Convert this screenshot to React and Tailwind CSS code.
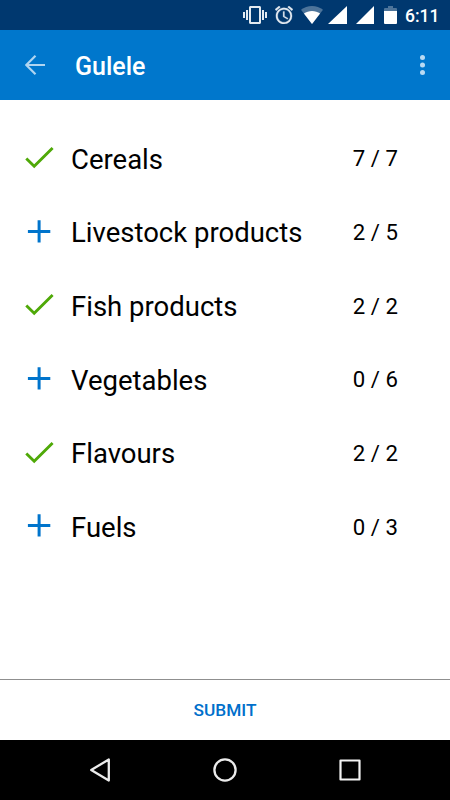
import React from 'react'

const ITEMS = [
  { name: 'Cereals', done: 7, total: 7 },
  { name: 'Livestock products', done: 2, total: 5 },
  { name: 'Fish products', done: 2, total: 2 },
  { name: 'Vegetables', done: 0, total: 6 },
  { name: 'Flavours', done: 2, total: 2 },
  { name: 'Fuels', done: 0, total: 3 },
]

function StatusBar() {
  return (
    <div className="h-[30px] bg-[#00386f] flex items-center justify-end pr-[11px] text-white">
      {/* Vibrate */}
      <svg className="w-6 h-6 mr-2" viewBox="0 0 24 24" fill="#e3eaf1">
        <path d="M0 15h2V9H0v6zm3 2h2V7H3v10zm19-8v6h2V9h-2zm-3 8h2V7h-2v10zM16.5 3h-9C6.67 3 6 3.67 6 4.5v15c0 .83.67 1.5 1.5 1.5h9c.83 0 1.5-.67 1.5-1.5v-15c0-.83-.67-1.5-1.5-1.5zM16 19H8V5h8v14z" />
      </svg>
      {/* Alarm */}
      <svg className="w-[18px] h-[18px] mr-2" viewBox="2 2 20 20" fill="#e3eaf1" stroke="#e3eaf1" strokeWidth="0.3">
        <path d="M22 5.72l-4.6-3.86-1.29 1.53 4.6 3.86L22 5.72zM7.88 3.39L6.6 1.86 2 5.71l1.29 1.53 4.59-3.85zM12.5 8H11v6l4.75 2.85.75-1.23-4-2.37V8zM12 4c-4.97 0-9 4.03-9 9s4.02 9 9 9a9 9 0 0 0 0-18zm0 16c-3.87 0-7-3.13-7-7s3.13-7 7-7 7 3.13 7 7-3.13 7-7 7z" />
      </svg>
      {/* Wifi */}
      <svg className="w-[22px] h-[18px] mr-[5px]" viewBox="0 0 22 18">
        <path d="M11 18L0 3.7C3 1.5 7 0 11 0s8 1.500 11 3.700z" fill="#4d749a" />
        <path d="M11 18L2.900 7.500C5.200 5.900 8 5 11 5s5.800.9 8.100 2.500z" fill="#fff" />
      </svg>
      {/* Signal, both SIMs */}
      <svg className="w-[19px] h-[18px] mr-[9px]" viewBox="0 0 19 18" fill="#fff">
        <path d="M0 18L19 0v18z" />
      </svg>
      <svg className="w-[18px] h-[18px] mr-[10px]" viewBox="0 0 18 18" fill="#fff">
        <path d="M0 18L18 0v18z" />
      </svg>
      {/* Battery */}
      <svg className="w-[13px] h-[18px] mr-2" viewBox="0 0 13 18">
        <path d="M0 3q0-1 1-1h3V0h5v2h3q1 0 1 1v2H0z" fill="#4d749a" />
        <path d="M0 5h13v12q0 1-1 1H1q-1 0-1-1z" fill="#fff" />
      </svg>
      <span className="w-[34px] pt-[3px] text-[17.5px] leading-none font-medium whitespace-nowrap">6:11</span>
    </div>
  )
}

function Header() {
  return (
    <header className="h-[70px] bg-[#0077cc] flex items-center pl-[25px] pr-[25px] text-white">
      <svg className="w-5 h-5" viewBox="0 0 20 20" fill="none" stroke="#b0d5f1" strokeWidth="2.200">
        <path d="M20 10H2M10.500 0.800L1.300 10l9.200 9.200" />
      </svg>
      <h1 className="ml-[30px] pt-0.5 text-[25px] leading-none font-medium">Gulele</h1>
      <svg className="w-[5px] h-5 ml-auto" viewBox="0 0 5 20" fill="#b9daf3">
        <circle cx="2.500" cy="2.500" r="2.500" />
        <circle cx="2.500" cy="10" r="2.500" />
        <circle cx="2.500" cy="17.500" r="2.500" />
      </svg>
    </header>
  )
}

function ItemIcon({ complete }) {
  return (
    <svg className="w-[30px] h-[30px]" viewBox="0 0 30 30" fill="none">
      {complete ? (
        <path d="M2.300 15.500L10.200 23.300L28.600 5" stroke="#4fa908" strokeWidth="2.900" />
      ) : (
        <path d="M15.100 3.200v22.400M3.900 14.400h22.400" stroke="#0074cc" strokeWidth="3" />
      )}
    </svg>
  )
}

function Item({ name, done, total }) {
  return (
    <li className="h-[73.7px] flex items-center pl-6 pr-[52px]">
      <ItemIcon complete={done === total} />
      <span className="ml-[17px] pt-[3px] text-[27.5px] leading-none whitespace-nowrap">{name}</span>
      <span className="ml-auto pt-px text-[22.2px] leading-none whitespace-nowrap">
        {done} / {total}
      </span>
    </li>
  )
}

function NavBar() {
  return (
    <nav className="h-[60px] bg-black flex items-center justify-between px-[88px]">
      <svg className="w-6 h-6" viewBox="0 0 24 24" fill="none" stroke="#ececec" strokeWidth="2.300" strokeLinejoin="round">
        <path d="M20.800 1.500v21L3.200 12z" />
      </svg>
      <svg className="w-6 h-6" viewBox="0 0 24 24" fill="none" stroke="#ececec" strokeWidth="2.300">
        <circle cx="12" cy="12" r="10.600" />
      </svg>
      <svg className="w-6 h-6" viewBox="0 0 24 24" fill="none" stroke="#f2f2f2" strokeWidth="2.200" strokeLinejoin="round">
        <path d="M2.500 2.500h19v19h-19z" />
      </svg>
    </nav>
  )
}

export default function App() {
  return (
    <div className="w-[450px] h-[800px] flex flex-col bg-white text-black font-[Roboto,sans-serif] overflow-hidden">
      <StatusBar />
      <Header />
      <ul className="flex-1 pt-[21px]">
        {ITEMS.map((item) => (
          <Item key={item.name} {...item} />
        ))}
      </ul>
      <button className="h-[61px] pt-0.5 border-t border-[#8f8f8f] text-[17.3px] font-medium text-[#006fcb]">SUBMIT</button>
      <NavBar />
    </div>
  )
}
